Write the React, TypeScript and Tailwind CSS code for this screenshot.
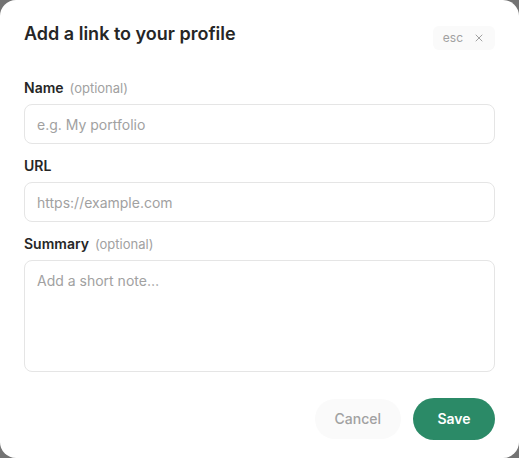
import { X } from "lucide-react";

function Field({
  label,
  hint,
  placeholder,
  multiline,
}: {
  label: string;
  hint?: string;
  placeholder: string;
  multiline?: boolean;
}) {
  return (
    <div className="flex flex-col gap-1.5">
      <div className="flex items-baseline gap-1.5 h-5 leading-5">
        <span className="text-sm font-semibold text-neutral-800">{label}</span>
        {hint && <span className="text-[13px] text-neutral-400">{hint}</span>}
      </div>
      {multiline ? (
        <textarea
          placeholder={placeholder}
          className="h-[112px] w-full resize-none rounded-lg border border-neutral-200 bg-white px-3 py-2.5 text-sm text-neutral-800 placeholder:text-neutral-400 outline-none"
        />
      ) : (
        <input
          placeholder={placeholder}
          className="h-10 w-full rounded-lg border border-neutral-200 bg-white px-3 text-sm text-neutral-800 placeholder:text-neutral-400 outline-none"
        />
      )}
    </div>
  );
}

export default function App() {
  return (
    <div
      className="h-[458px] w-full bg-neutral-500"
      style={{ fontFamily: "Inter, 'Noto Sans', sans-serif" }}
    >
      <div className="flex h-full w-full flex-col rounded-2xl bg-white px-6 pt-5 pb-[18px]">
        <div className="flex h-7 items-center justify-between">
          <h2 className="text-lg font-semibold text-neutral-800">Add a link to your profile</h2>
          <button className="mt-2 flex h-6 items-center gap-2.5 rounded-md bg-neutral-50 px-2.5 text-xs text-neutral-400">
            <span>esc</span>
            <X size={12} strokeWidth={2} />
          </button>
        </div>

        <div className="mt-[30px] flex flex-col gap-3">
          <Field label="Name" hint="(optional)" placeholder="e.g. My portfolio" />
          <Field label="URL" placeholder="https://example.com" />
          <Field label="Summary" hint="(optional)" placeholder="Add a short note…" multiline />
        </div>

        <div className="mt-auto flex items-center justify-end gap-3">
          <button className="h-10 rounded-full bg-neutral-50 px-5 text-sm font-medium text-neutral-400">
            Cancel
          </button>
          <button className="h-[42px] w-[82px] rounded-full bg-[#2b8a67] text-sm font-semibold text-white">
            Save
          </button>
        </div>
      </div>
    </div>
  );
}
